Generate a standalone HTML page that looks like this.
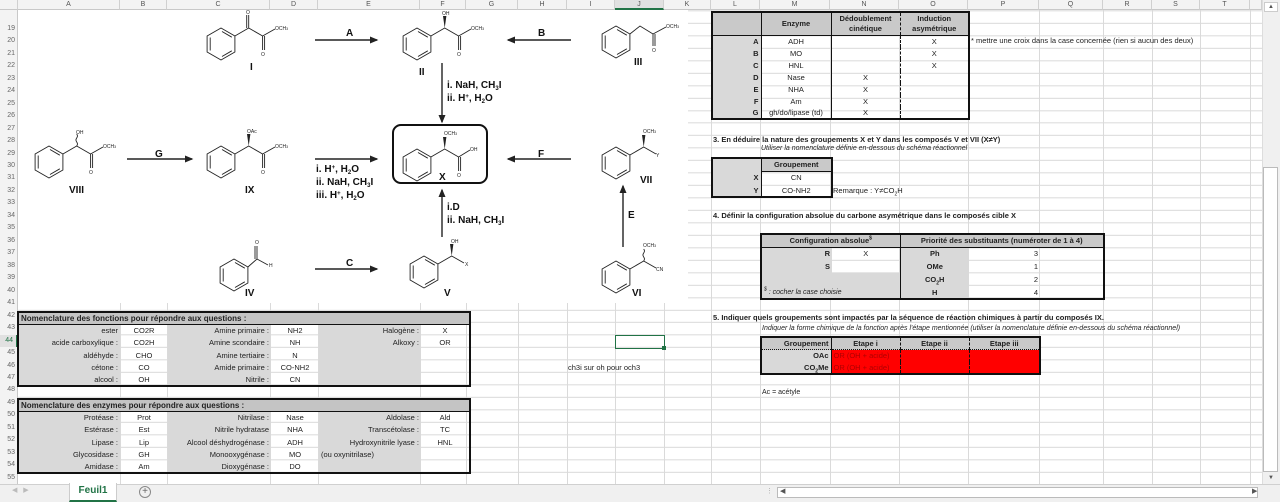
<!DOCTYPE html>
<html><head><meta charset="utf-8">
<style>
*{margin:0;padding:0;box-sizing:border-box}
body{width:1280px;height:502px;overflow:hidden;background:#fff;font-family:"Liberation Sans",sans-serif;position:relative;color:#222}
.a{position:absolute;white-space:nowrap}
sub,sup{line-height:0}
.grid{position:absolute;left:18px;top:10px;width:1244px;height:474px;
background-image:repeating-linear-gradient(to bottom,#dadada 0,#dadada 1px,transparent 1px,transparent 12.47px);background-position:0 0.33px}
.vl{position:absolute;top:10px;height:474px;width:1px;background:#dadada}
.ch{position:absolute;top:0;height:10px;background:#f3f3f3;border-bottom:1px solid #c8c8c8;font-size:7px;color:#555;text-align:center;line-height:10px;border-right:1px solid #d0d0d0}
.rh{position:absolute;left:0;width:18px;font-size:7px;color:#666;text-align:right;padding-right:3px;height:12.47px;line-height:12.47px}
.t{font-size:7.5px;line-height:12.47px}
table{border-collapse:collapse;table-layout:fixed;position:absolute;font-size:7.5px}
td{height:12.3px;line-height:11px;padding:0 2px;white-space:nowrap;overflow:visible}
.e td{height:12px}
.g{background:#d9d9d9}
.gh{background:#c4c4c4}
.r{text-align:right}.c{text-align:center}
.b{font-weight:bold}
.lab{font-family:"Liberation Sans",sans-serif;font-size:10px;font-weight:bold;fill:#111}
.sm{font-family:"Liberation Sans",sans-serif;font-size:5px;fill:#222}
</style></head><body>
<div class="ch" style="left:0;width:18px"></div>
<div class="ch" style="left:18px;width:102px">A</div>
<div class="ch" style="left:120px;width:47px">B</div>
<div class="ch" style="left:167px;width:103px">C</div>
<div class="ch" style="left:270px;width:48px">D</div>
<div class="ch" style="left:318px;width:102px">E</div>
<div class="ch" style="left:420px;width:46px">F</div>
<div class="ch" style="left:466px;width:52px">G</div>
<div class="ch" style="left:518px;width:49px">H</div>
<div class="ch" style="left:567px;width:48px">I</div>
<div class="ch" style="left:615px;width:49px;background:#e1e1e1;border-bottom:2px solid #217346">J</div>
<div class="ch" style="left:664px;width:47px">K</div>
<div class="ch" style="left:711px;width:49px">L</div>
<div class="ch" style="left:760px;width:70px">M</div>
<div class="ch" style="left:830px;width:69px">N</div>
<div class="ch" style="left:899px;width:69px">O</div>
<div class="ch" style="left:968px;width:71px">P</div>
<div class="ch" style="left:1039px;width:64px">Q</div>
<div class="ch" style="left:1103px;width:49px">R</div>
<div class="ch" style="left:1152px;width:48px">S</div>
<div class="ch" style="left:1200px;width:50px">T</div>
<div class="ch" style="left:1250px;width:12px"></div>
<div class="grid"></div>
<div class="vl" style="left:120px"></div><div class="vl" style="left:167px"></div><div class="vl" style="left:270px"></div><div class="vl" style="left:318px"></div><div class="vl" style="left:420px"></div><div class="vl" style="left:466px"></div><div class="vl" style="left:518px"></div><div class="vl" style="left:567px"></div><div class="vl" style="left:615px"></div><div class="vl" style="left:664px"></div><div class="vl" style="left:711px"></div><div class="vl" style="left:760px"></div><div class="vl" style="left:830px"></div><div class="vl" style="left:899px"></div><div class="vl" style="left:968px"></div><div class="vl" style="left:1039px"></div><div class="vl" style="left:1103px"></div><div class="vl" style="left:1152px"></div><div class="vl" style="left:1200px"></div><div class="vl" style="left:1250px"></div>
<div style="position:absolute;left:0;top:10px;width:18px;height:474px;background:#f3f3f3;border-right:1px solid #c8c8c8"></div>
<div class="rh" style="top:22.8px">19</div><div class="rh" style="top:35.3px">20</div><div class="rh" style="top:47.7px">21</div><div class="rh" style="top:60.2px">22</div><div class="rh" style="top:72.7px">23</div><div class="rh" style="top:85.2px">24</div><div class="rh" style="top:97.6px">25</div><div class="rh" style="top:110.1px">26</div><div class="rh" style="top:122.6px">27</div><div class="rh" style="top:135px">28</div><div class="rh" style="top:147.5px">29</div><div class="rh" style="top:160px">30</div><div class="rh" style="top:172.4px">31</div><div class="rh" style="top:184.9px">32</div><div class="rh" style="top:197.4px">33</div><div class="rh" style="top:209.9px">34</div><div class="rh" style="top:222.3px">35</div><div class="rh" style="top:234.8px">36</div><div class="rh" style="top:247.3px">37</div><div class="rh" style="top:259.7px">38</div><div class="rh" style="top:272.2px">39</div><div class="rh" style="top:284.7px">40</div><div class="rh" style="top:297.1px">41</div><div class="rh" style="top:309.6px">42</div><div class="rh" style="top:322.1px">43</div><div class="rh" style="top:334.5px;background:#e1e1e1;color:#217346;border-right:2px solid #217346">44</div><div class="rh" style="top:347px">45</div><div class="rh" style="top:359.5px">46</div><div class="rh" style="top:372px">47</div><div class="rh" style="top:384.4px">48</div><div class="rh" style="top:396.9px">49</div><div class="rh" style="top:409.4px">50</div><div class="rh" style="top:421.8px">51</div><div class="rh" style="top:434.3px">52</div><div class="rh" style="top:446.8px">53</div><div class="rh" style="top:459.2px">54</div><div class="rh" style="top:471.7px">55</div>

<div style="position:absolute;left:18px;top:10px;width:670px;height:293px;background:#fff"></div>
<svg class="a" style="left:0;top:0" width="700" height="310" viewBox="0 0 700 310">
<defs>
<g id="bz" fill="none" stroke="#222" stroke-width="0.9">
<polygon points="0,-16 13.9,-8 13.9,8 0,16 -13.9,8 -13.9,-8"/>
<path d="M1,-12.5 L10.8,-6.8 M10.8,6.8 L1,12.5 M-10.8,6.5 L-10.8,-6.5"/>
</g>
<marker id="ar" markerWidth="6" markerHeight="6" refX="5" refY="3" orient="auto"><path d="M0,0.5 L6,3 L0,5.5z" fill="#222"/></marker>
</defs>
<g stroke="#222" stroke-width="1.4" marker-end="url(#ar)">
<line x1="315" y1="40" x2="377" y2="40"/>
<line x1="571" y1="40" x2="508" y2="40"/>
<line x1="442" y1="63" x2="442" y2="122"/>
<line x1="127" y1="159" x2="192" y2="159"/>
<line x1="315" y1="159" x2="377" y2="159"/>
<line x1="571" y1="159" x2="508" y2="159"/>
<line x1="442" y1="237" x2="442" y2="190"/>
<line x1="623" y1="247" x2="623" y2="186"/>
<line x1="315" y1="269" x2="377" y2="269"/>
</g>
<rect x="393" y="125" width="94" height="58" rx="8" fill="none" stroke="#111" stroke-width="2"/>
<g transform="translate(221,44)"><use href="#bz"/><g stroke="#222" stroke-width="0.9" fill="none"><path d="M13.9,-8 L27.7,-16 L41.6,-8 L54,-15 M27.7,-16 L27.7,-29 M25.7,-16 L25.7,-29 M41.6,-8 L41.6,6 M43.6,-8 L43.6,6"/></g><text class="sm" x="25" y="-30">O</text><text class="sm" x="40" y="12">O</text><text class="sm" x="54" y="-14">OCH<tspan font-size="3.5">3</tspan></text></g>
<g transform="translate(417,44)"><use href="#bz"/><g stroke="#222" stroke-width="0.9" fill="none"><path d="M13.9,-8 L27.7,-16 L41.6,-8 L54,-15 M41.6,-8 L41.6,6 M43.6,-8 L43.6,6"/></g><polygon points="27.7,-16 26,-28 29.4,-28" fill="#222"/><text class="sm" x="25" y="-29">OH</text><text class="sm" x="40" y="12">O</text><text class="sm" x="54" y="-14">OCH<tspan font-size="3.5">3</tspan></text></g>
<g transform="translate(616,42)"><use href="#bz"/><g stroke="#222" stroke-width="0.9" fill="none"><path d="M13.9,-8 L24,-16 L37,-8 L50,-15 M37,-8 L37,4 M39,-8 L39,4"/></g><text class="sm" x="36" y="10">O</text><text class="sm" x="50" y="-14">OCH<tspan font-size="3.5">3</tspan></text></g>
<g transform="translate(49,162)"><use href="#bz"/><g stroke="#222" stroke-width="0.9" fill="none"><path d="M13.9,-8 L27.7,-16 L41.6,-8 L54,-15 M41.6,-8 L41.6,6 M43.6,-8 L43.6,6 M27.7,-16 q1.5,-2 0,-4 q-1.5,-2 0,-4 q1.5,-2 0,-4"/></g><text class="sm" x="27" y="-28">OH</text><text class="sm" x="40" y="12">O</text><text class="sm" x="54" y="-14">OCH<tspan font-size="3.5">3</tspan></text></g>
<g transform="translate(221,162)"><use href="#bz"/><g stroke="#222" stroke-width="0.9" fill="none"><path d="M13.9,-8 L27.7,-16 L41.6,-8 L54,-15 M41.6,-8 L41.6,6 M43.6,-8 L43.6,6"/></g><polygon points="27.7,-16 26,-28 29.4,-28" fill="#222"/><text class="sm" x="26" y="-29">OAc</text><text class="sm" x="40" y="12">O</text><text class="sm" x="54" y="-14">OCH<tspan font-size="3.5">3</tspan></text></g>
<g transform="translate(417,165)"><use href="#bz"/><g stroke="#222" stroke-width="0.9" fill="none"><path d="M13.9,-8 L27.7,-16 L41.6,-8 L53,-15 M41.6,-8 L41.6,6 M43.6,-8 L43.6,6"/></g><polygon points="27.7,-16 26,-28 29.4,-28" fill="#222"/><text class="sm" x="27" y="-30">OCH<tspan font-size="3.5">3</tspan></text><text class="sm" x="40" y="12">O</text><text class="sm" x="53" y="-14">OH</text></g>
<g transform="translate(616,163)"><use href="#bz"/><g stroke="#222" stroke-width="0.9" fill="none"><path d="M13.9,-8 L27.7,-16 L40,-9"/></g><polygon points="27.7,-16 26,-28 29.4,-28" fill="#222"/><text class="sm" x="27" y="-30">OCH<tspan font-size="3.5">3</tspan></text><text class="sm" x="40" y="-6">Y</text></g>
<g transform="translate(234,275)"><use href="#bz"/><g stroke="#222" stroke-width="0.9" fill="none"><path d="M13.9,-8 L23,-16 L34,-10 M23,-16 L23,-29 M21,-16 L21,-29"/></g><text class="sm" x="21" y="-31">O</text><text class="sm" x="35" y="-8">H</text></g>
<g transform="translate(424,272)"><use href="#bz"/><g stroke="#222" stroke-width="0.9" fill="none"><path d="M13.9,-8 L27.7,-16 L40,-9"/></g><polygon points="27.7,-16 26,-28 29.4,-28" fill="#222"/><text class="sm" x="27" y="-29">OH</text><text class="sm" x="41" y="-6">X</text></g>
<g transform="translate(616,277)"><use href="#bz"/><g stroke="#222" stroke-width="0.9" fill="none"><path d="M13.9,-8 L27.7,-16 L40,-9 M27.7,-16 q1.5,-2 0,-4 q-1.5,-2 0,-4 q1.5,-2 0,-4"/></g><text class="sm" x="27" y="-30">OCH<tspan font-size="3.5">3</tspan></text><text class="sm" x="40" y="-6">CN</text></g>
<text class="lab" x="250" y="70">I</text>
<text class="lab" x="419" y="75">II</text>
<text class="lab" x="634" y="65">III</text>
<text class="lab" x="69" y="193">VIII</text>
<text class="lab" x="245" y="193">IX</text>
<text class="lab" x="439" y="180">X</text>
<text class="lab" x="640" y="183">VII</text>
<text class="lab" x="245" y="296">IV</text>
<text class="lab" x="444" y="296">V</text>
<text class="lab" x="632" y="296">VI</text>
<g class="lab" font-size="9">
<text x="346" y="36">A</text><text x="538" y="36">B</text><text x="155" y="157">G</text><text x="538" y="157">F</text><text x="346" y="266">C</text><text x="628" y="218">E</text>
<text x="447" y="88">i. NaH, CH<tspan font-size="6" dy="2">3</tspan><tspan dy="-2">I</tspan></text>
<text x="447" y="101">ii. H<tspan font-size="6" dy="-3">+</tspan><tspan dy="3">, H</tspan><tspan font-size="6" dy="2">2</tspan><tspan dy="-2">O</tspan></text>
<text x="316" y="172">i. H<tspan font-size="6" dy="-3">+</tspan><tspan dy="3">, H</tspan><tspan font-size="6" dy="2">2</tspan><tspan dy="-2">O</tspan></text>
<text x="316" y="185">ii. NaH, CH<tspan font-size="6" dy="2">3</tspan><tspan dy="-2">I</tspan></text>
<text x="316" y="198">iii. H<tspan font-size="6" dy="-3">+</tspan><tspan dy="3">, H</tspan><tspan font-size="6" dy="2">2</tspan><tspan dy="-2">O</tspan></text>
<text x="447" y="210">i.D</text>
<text x="447" y="223">ii. NaH, CH<tspan font-size="6" dy="2">3</tspan><tspan dy="-2">I</tspan></text>
</g>
</svg>

<table style="left:17px;top:311px;width:452px;border:2px solid #111">
<colgroup><col style="width:102px"><col style="width:48px"><col style="width:103px"><col style="width:48px"><col style="width:102px"><col style="width:49px"></colgroup>
<tr class="gh b" style="border-bottom:1.5px solid #111"><td colspan="6" style="font-size:8px">Nomenclature des fonctions pour répondre aux questions :</td></tr>
<tr><td class="g r">ester</td><td class="c">CO2R</td><td class="g r">Amine primaire :</td><td class="c">NH2</td><td class="g r">Halogène :</td><td class="c">X</td></tr>
<tr><td class="g r">acide carboxylique :</td><td class="c">CO2H</td><td class="g r">Amine scondaire :</td><td class="c">NH</td><td class="g r">Alkoxy :</td><td class="c">OR</td></tr>
<tr><td class="g r">aldéhyde :</td><td class="c">CHO</td><td class="g r">Amine tertiaire :</td><td class="c">N</td><td class="g"></td><td></td></tr>
<tr><td class="g r">cétone :</td><td class="c">CO</td><td class="g r">Amide primaire :</td><td class="c">CO-NH2</td><td class="g"></td><td></td></tr>
<tr><td class="g r">alcool :</td><td class="c">OH</td><td class="g r">Nitrile :</td><td class="c">CN</td><td class="g"></td><td></td></tr>
</table>
<table style="left:17px;top:398px;width:452px;border:2px solid #111">
<colgroup><col style="width:102px"><col style="width:48px"><col style="width:103px"><col style="width:48px"><col style="width:102px"><col style="width:49px"></colgroup>
<tr class="gh b" style="border-bottom:1.5px solid #111"><td colspan="6" style="font-size:8px">Nomenclature des enzymes pour répondre aux questions :</td></tr>
<tr><td class="g r">Protéase :</td><td class="c">Prot</td><td class="g r">Nitrilase :</td><td class="c">Nase</td><td class="g r">Aldolase :</td><td class="c">Ald</td></tr>
<tr><td class="g r">Estérase :</td><td class="c">Est</td><td class="g r">Nitrile hydratase</td><td class="c">NHA</td><td class="g r">Transcétolase :</td><td class="c">TC</td></tr>
<tr><td class="g r">Lipase :</td><td class="c">Lip</td><td class="g r">Alcool déshydrogénase :</td><td class="c">ADH</td><td class="g r">Hydroxynitrile lyase :</td><td class="c">HNL</td></tr>
<tr><td class="g r">Glycosidase :</td><td class="c">GH</td><td class="g r">Monooxygénase :</td><td class="c">MO</td><td class="g">(ou oxynitrilase)</td><td></td></tr>
<tr><td class="g r">Amidase :</td><td class="c">Am</td><td class="g r">Dioxygénase :</td><td class="c">DO</td><td class="g"></td><td></td></tr>
</table>
<div class="a" style="left:615px;top:335px;width:50px;height:14px;border:1.5px solid #217346"></div>
<div class="a" style="left:662px;top:346px;width:4px;height:4px;background:#217346"></div>
<div class="a t" style="left:568px;top:362px">ch3i sur oh pour och3</div>

<table class="e" style="left:711px;top:11px;width:258px;border:2px solid #111">
<colgroup><col style="width:49px"><col style="width:70px"><col style="width:69px"><col style="width:69px"></colgroup>
<tr class="b c" style="background:#c9c9c9;border-bottom:1.5px solid #111"><td style="height:23px"></td><td style="border-left:1px solid #111">Enzyme</td><td style="border-left:1px solid #111;line-height:10px">Dédoublement<br>cinétique</td><td style="border-left:1px dashed #111;line-height:10px">Induction<br>asymétrique</td></tr>
<tr><td class="g r b">A</td><td class="c" style="border-left:1px solid #111">ADH</td><td style="border-left:1px solid #111"></td><td class="c" style="border-left:1px dashed #111">X</td></tr>
<tr><td class="g r b">B</td><td class="c" style="border-left:1px solid #111">MO</td><td style="border-left:1px solid #111"></td><td class="c" style="border-left:1px dashed #111">X</td></tr>
<tr><td class="g r b">C</td><td class="c" style="border-left:1px solid #111">HNL</td><td style="border-left:1px solid #111"></td><td class="c" style="border-left:1px dashed #111">X</td></tr>
<tr><td class="g r b">D</td><td class="c" style="border-left:1px solid #111">Nase</td><td class="c" style="border-left:1px solid #111">X</td><td style="border-left:1px dashed #111"></td></tr>
<tr><td class="g r b">E</td><td class="c" style="border-left:1px solid #111">NHA</td><td class="c" style="border-left:1px solid #111">X</td><td style="border-left:1px dashed #111"></td></tr>
<tr><td class="g r b">F</td><td class="c" style="border-left:1px solid #111">Am</td><td class="c" style="border-left:1px solid #111">X</td><td style="border-left:1px dashed #111"></td></tr>
<tr><td class="g r b">G</td><td class="c" style="border-left:1px solid #111">gh/do/lipase (td)</td><td class="c" style="border-left:1px solid #111">X</td><td style="border-left:1px dashed #111"></td></tr>
</table>
<div class="a t" style="left:971px;top:35.3px">* mettre une croix dans la case concernée (rien si aucun des deux)</div>

<div class="a t b" style="left:713px;top:134px">3. En déduire la nature des groupements X et Y dans les composés V et VII (X≠Y)</div>
<div class="a t" style="left:761px;top:143px;font-style:italic;font-size:7px">Utiliser la nomenclature définie en-dessous du schéma réactionnel</div>
<table style="left:711px;top:157px;width:120px;border:2px solid #111">
<colgroup><col style="width:49px"><col style="width:71px"></colgroup>
<tr><td class="g" style="height:13px"></td><td class="c b" style="background:#c9c9c9;border-left:1px solid #111;border-bottom:1px solid #111">Groupement</td></tr>
<tr><td class="g r b" style="height:13px">X</td><td class="c" style="border-left:1px solid #111">CN</td></tr>
<tr><td class="g r b" style="height:13px">Y</td><td class="c" style="border-left:1px solid #111">CO-NH2</td></tr>
</table>
<div class="a t" style="left:833px;top:185px">Remarque : Y≠CO<sub style="font-size:5px">2</sub>H</div>

<div class="a t b" style="left:713px;top:210px">4. Définir la configuration absolue du carbone asymétrique dans le composés cible X</div>
<table style="left:760px;top:233px;width:343px;border:2px solid #111">
<colgroup><col style="width:71px"><col style="width:68px"><col style="width:69px"><col style="width:135px"></colgroup>
<tr class="b c" style="background:#c9c9c9;border-bottom:1px solid #111"><td colspan="2" style="height:13px">Configuration absolue<sup style="font-size:5px">$</sup></td><td colspan="2" style="border-left:1.5px solid #111">Priorité des substituants (numéroter de 1 à 4)</td></tr>
<tr><td class="g r b" style="height:13px">R</td><td class="c">X</td><td class="g c b" style="border-left:1.5px solid #111">Ph</td><td class="c">3</td></tr>
<tr><td class="g r b" style="height:13px">S</td><td></td><td class="g c b" style="border-left:1.5px solid #111">OMe</td><td class="c">1</td></tr>
<tr><td class="g" style="height:13px"></td><td class="g"></td><td class="g c b" style="border-left:1.5px solid #111">CO<sub style="font-size:5px">2</sub>H</td><td class="c">2</td></tr>
<tr><td class="g" colspan="2" style="font-style:italic;font-size:7px;height:13px"><sup style="font-size:5px">$</sup> : cocher la case choisie</td><td class="g c b" style="border-left:1.5px solid #111">H</td><td class="c">4</td></tr>
</table>

<div class="a t b" style="left:713px;top:312px">5. Indiquer quels groupements sont impactés par la séquence de réaction chimiques à partir du composés IX.</div>
<div class="a t" style="left:762px;top:323px;font-style:italic;font-size:7px">Indiquer la forme chimique de la fonction après l'étape mentionnée (utiliser la nomenclature définie en-dessous du schéma réactionnel)</div>
<table class="e" style="left:760px;top:336px;width:279px;border:2px solid #111">
<colgroup><col style="width:70px"><col style="width:69px"><col style="width:69px"><col style="width:71px"></colgroup>
<tr class="b c" style="background:#c9c9c9;border-bottom:1px dotted #111"><td class="r">Groupement</td><td style="border-left:1px solid #111">Etape i</td><td style="border-left:1px dashed #111">Etape ii</td><td style="border-left:1px dashed #111">Etape iii</td></tr>
<tr><td class="g r b">OAc</td><td style="background:#f00;color:#b00000;border-left:1px solid #111">OR (OH + acide)</td><td style="background:#f00;border-left:1px dashed #111"></td><td style="background:#f00;border-left:1px dashed #111"></td></tr>
<tr><td class="g r b">CO<sub style="font-size:5px">2</sub>Me</td><td style="background:#f00;color:#b00000;border-left:1px solid #111">OR (OH + acide)</td><td style="background:#f00;border-left:1px dashed #111"></td><td style="background:#f00;border-left:1px dashed #111"></td></tr>
</table>
<div class="a t" style="left:762px;top:387px;font-size:7px">Ac = acétyle</div>

<div class="a" style="left:1262px;top:0;width:18px;height:484px;background:#f0f0f0;border-left:1px solid #ddd"></div>
<div class="a" style="left:1264px;top:2px;width:14px;height:10px;background:#fff;border:1px solid #ccc;font-size:6px;text-align:center;line-height:8px;color:#555">▲</div>
<div class="a" style="left:1263px;top:167px;width:15px;height:305px;background:#fff;border:1px solid #bbb"></div>
<div class="a" style="left:1264px;top:473px;width:14px;height:10px;font-size:6px;text-align:center;line-height:10px;color:#555">▼</div>
<div class="a" style="left:0;top:484px;width:1280px;height:18px;background:#f0f0f0;border-top:1px solid #d0d0d0"></div>
<div class="a" style="left:12px;top:486px;font-size:7px;color:#bbb">◀ &nbsp; ▶</div>
<div class="a" style="left:69px;top:483px;width:48px;height:19px;background:#fff;border-left:1px solid #ccc;border-right:1px solid #ccc;border-bottom:2px solid #217346;color:#217346;font-weight:bold;font-size:10px;text-align:center;line-height:16px">Feuil1</div>
<div class="a" style="left:139px;top:486px;width:12px;height:12px;border:1px solid #888;border-radius:50%;text-align:center;line-height:10px;font-size:10px;color:#666">+</div>
<div class="a" style="left:766px;top:487px;font-size:7px;color:#aaa">⋮</div>
<div class="a" style="left:777px;top:487px;width:481px;height:11px;background:#fff;border:1px solid #bbb"></div>
<div class="a" style="left:780px;top:487px;font-size:7px;color:#555">◀</div>
<div class="a" style="left:1252px;top:487px;font-size:7px;color:#555">▶</div>
</body></html>
